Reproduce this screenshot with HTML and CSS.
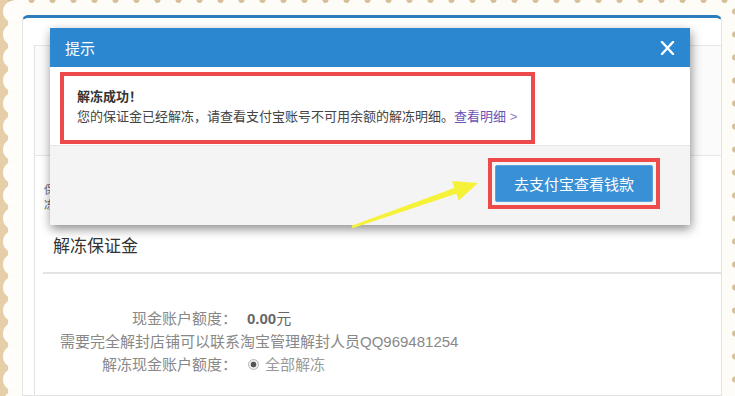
FILE: index.html
```html
<!DOCTYPE html>
<html lang="zh-CN">
<head>
    <meta charset="UTF-8">
    <title>解冻保证金</title>
    <link rel="stylesheet" href="styles.css">
</head>
<body>
    <div class="card">
        <div class="content">
            <div class="nav"></div>
            <div class="info">
                <p>保证金余额</p>
                <p>冻结状态</p>
            </div>
            <h2 class="section-title">解冻保证金</h2>
            <div class="form">
                <div class="row">
                    <span class="label">现金账户额度：</span>
                    <span class="value"><b>0.00</b>元</span>
                </div>
                <div class="note">需要完全解封店铺可以联系淘宝管理解封人员QQ969481254</div>
                <div class="row">
                    <span class="label">解冻现金账户额度：</span>
                    <span class="radio"></span>
                    <span class="radio-text">全部解冻</span>
                </div>
            </div>
        </div>
    </div>

    <!-- popup over the page -->
    <div class="dialog">
        <div class="dialog-head">
            <span class="dialog-title">提示</span>
            <svg class="close" width="15" height="14" viewBox="0 0 15 14">
                <path d="M2 1 L13 13 M13 1 L2 13" stroke="#fff" stroke-width="2.4" stroke-linecap="round"/>
            </svg>
        </div>
        <div class="dialog-body">
            <div class="mark msg">
                <strong>解冻成功！</strong>
                <p>您的保证金已经解冻，请查看支付宝账号不可用余额的解冻明细。<a href="#">查看明细 <span class="gt">&gt;</span></a></p>
            </div>
        </div>
        <div class="dialog-foot">
            <div class="mark">
                <button>去支付宝查看钱款</button>
            </div>
        </div>
    </div>

    <svg class="arrow" width="735" height="396" viewBox="0 0 735 396">
        <polygon points="351.5,225.8 454.3,188.1 452,181 478,183 458.8,200.6 456.3,193.7 352.5,228.2" fill="#f6f23a"/>
    </svg>
</body>
</html>
```

FILE: styles.css
```css
* {
    box-sizing: border-box;
}
body {
    position: relative;
    margin: 0;
    width: 735px;
    height: 396px;
    overflow: hidden;
    font-family: "Liberation Sans", "Noto Sans CJK SC", sans-serif;
    background-color: #fdfcf7;
    background-image:
        radial-gradient(circle at 14px 11.5px, #fefdf9 10.5px, transparent 11.5px),
        linear-gradient(#e6cfa8, #e6cfa8),
        radial-gradient(circle at 50% 0, #d6bf9a 2.5px, transparent 3.5px),
        radial-gradient(circle at 100% 50%, #d6bf9a 2.5px, transparent 3.5px);
    background-size: 26px 23px, 8px 100%, 21px 6px, 6px 23px;
    background-position: 0 0, 0 0, 0 0, right 0 top 0;
    background-repeat: repeat-y, no-repeat, repeat-x, repeat-y;
}
.card {
    margin: 15px 0 0 22px;
    width: 700px;
    height: 381px;
    padding: 27px 0 0 11px;
    background: #fff;
    border: 1px solid #e4e4e4;
    border-top: 3px solid #2d7cbc;
    border-radius: 6px 6px 0 0;
}
.content {
    height: 100%;
    border-left: 1px solid #e2e2e2;
}
.nav {
    height: 111px;
    background: #fbfbfb;
    border-top: 1px solid #e6e6e6;
    border-bottom: 1px solid #e6e6e6;
}
.info {
    height: 78px;
    padding: 27px 0 0 9px;
    font-size: 11px;
    line-height: 15px;
    color: #666;
}
.info p {
    margin: 0;
}
.section-title {
    margin: 0 0 0 8px;
    padding: 0 0 12px 10px;
    font-size: 17px;
    font-weight: normal;
    line-height: 26px;
    color: #333;
    border-bottom: 2px solid #e3e3e3;
}
.form {
    padding-top: 33px;
    font-size: 15px;
    line-height: 23px;
    color: #888;
}
.row {
    display: flex;
    align-items: center;
}
.label {
    width: 202px;
    text-align: right;
}
.value {
    margin-left: 10px;
    color: #666;
}
.value b {
    font-size: 15px;
}
.note {
    padding-left: 25px;
}
.radio {
    width: 11px;
    height: 11px;
    margin-left: 11px;
    border: 1px solid #b8b8b8;
    border-radius: 50%;
    background: radial-gradient(circle, #555 2.5px, #eee 3.2px);
}
.radio-text {
    margin-left: 6px;
    color: #999;
}

/* dialog */
.dialog {
    position: absolute;
    left: 50px;
    top: 28px;
    width: 640px;
    height: 197px;
    background: #fff;
    box-shadow: 1px 4px 10px rgba(0,0,0,0.45);
}
.dialog-head {
    display: flex;
    align-items: center;
    justify-content: space-between;
    height: 39px;
    padding: 0 15px 0 15px;
    background: #2a87d0;
    color: #fff;
}
.dialog-title {
    font-size: 15px;
}
.dialog-body {
    height: 78px;
    padding: 5px 0 0 10px;
}
.mark {
    border: 4px solid #ef4a4a;
}
.msg {
    width: 475px;
    height: 72px;
    padding: 11px 0 0 13px;
    font-size: 13px;
    line-height: 20px;
    color: #444;
}
.msg strong {
    color: #333;
}
.msg p {
    margin: 0;
}
.msg a {
    color: #6b52b8;
    text-decoration: none;
}
.msg .gt {
    color: #8a80c0;
}
.dialog-foot {
    display: flex;
    justify-content: flex-end;
    height: 80px;
    padding: 12px 30px 0 0;
    background: #f4f4f4;
    border-top: 1px solid #e6e6e6;
}
.dialog-foot .mark {
    height: 51px;
    padding: 3px;
}
button {
    width: 158px;
    height: 37px;
    padding: 0;
    font-family: "Liberation Sans", "Noto Sans CJK SC", sans-serif;
    font-size: 15px;
    color: #fff;
    background: #3a90d5;
    border: 1px solid #5aa3dd;
    border-radius: 2px;
}
.arrow {
    position: absolute;
    left: 0;
    top: 0;
    pointer-events: none;
}
```
